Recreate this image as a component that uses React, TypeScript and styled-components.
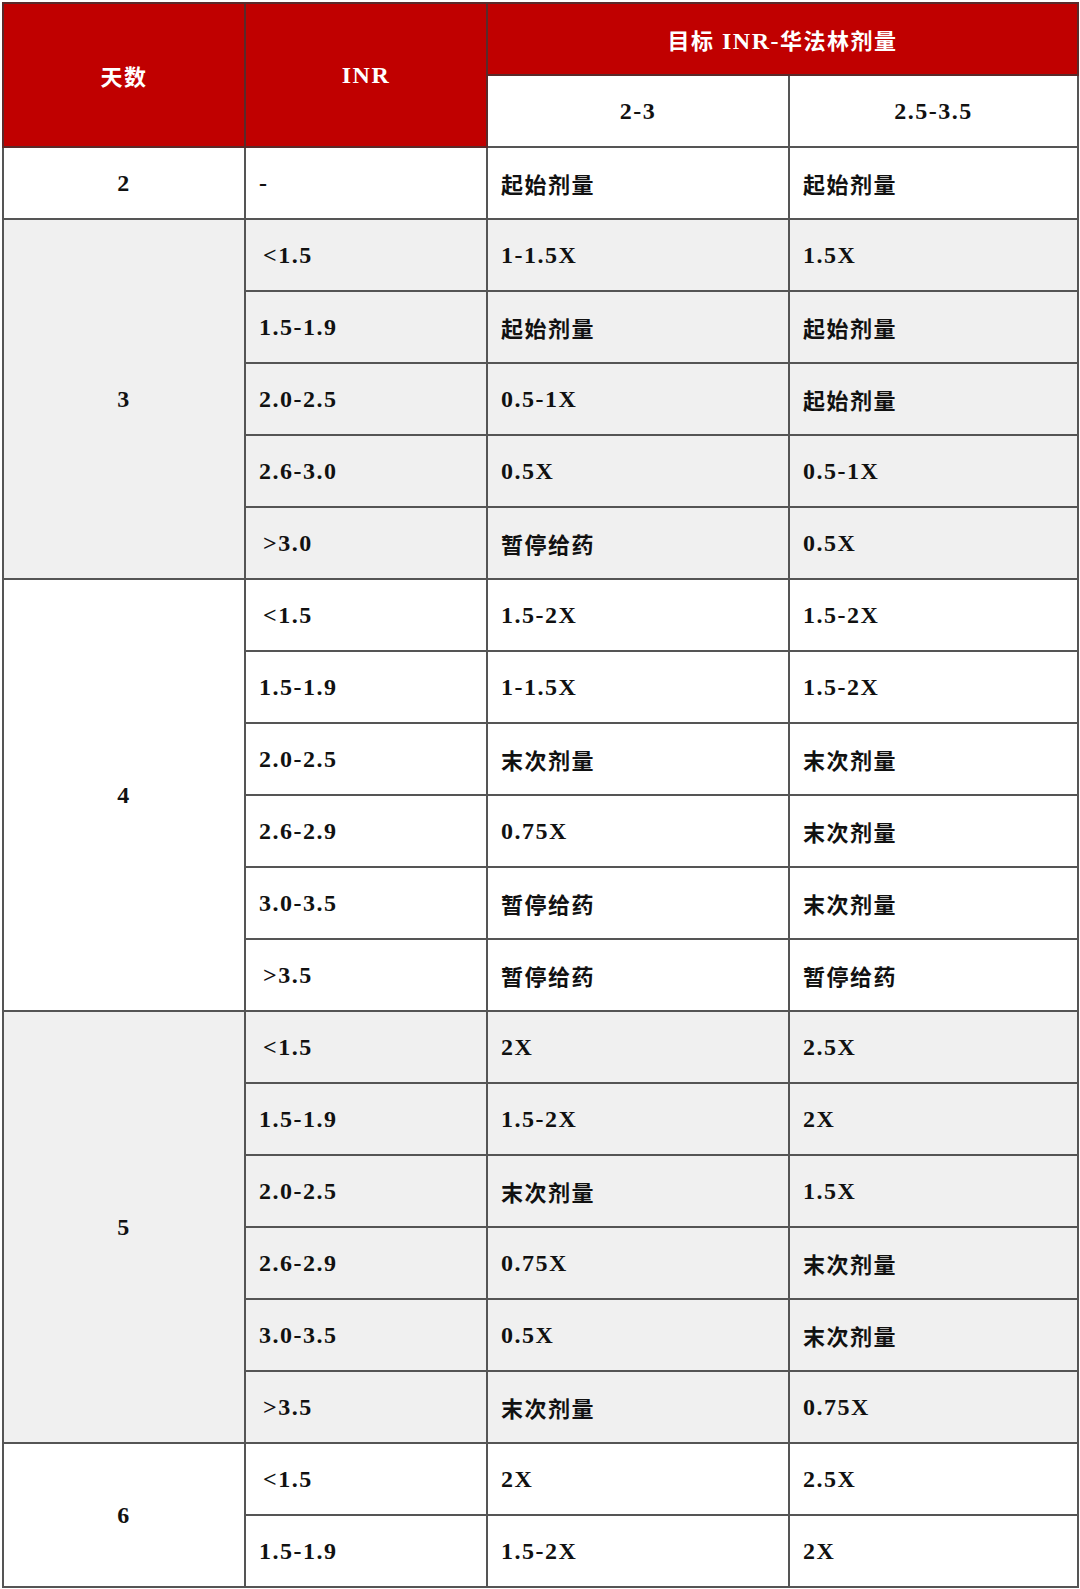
import React from "react";
import styled, { createGlobalStyle } from "styled-components";

const GlobalStyle = createGlobalStyle`
  html, body {
    margin: 0;
    padding: 0;
    background: #ffffff;
  }
  body {
    font-family: "Liberation Serif", "Noto Sans CJK SC", serif;
  }
`;

const Page = styled.div`
  padding: 2px 3px 3px 2px;
  background: #ffffff;
`;

const Table = styled.table`
  width: 1075px;
  border-collapse: collapse;
  table-layout: fixed;
  font-family: "Liberation Serif", "Noto Sans CJK SC", serif;
  font-weight: 700;
  font-size: 24px;
  letter-spacing: 1.5px;
  color: #111111;
  border: 2px solid #555555;
`;

const Row = styled.tr<{ $shade?: boolean }>`
  height: 72px;
  background: ${(p) => (p.$shade ? "#f0f0f0" : "#ffffff")};
`;

const HeadCell = styled.th`
  background: #c00000;
  color: #ffffff;
  font-weight: 700;
  text-align: center;
  vertical-align: middle;
  border: 2px solid #5a2a2a;
  padding: 0;
`;

const SubHeadCell = styled.th`
  background: #ffffff;
  color: #111111;
  font-weight: 700;
  text-align: center;
  vertical-align: middle;
  border: 2px solid #555555;
  padding: 0;
`;

const DayCell = styled.td`
  text-align: center;
  vertical-align: middle;
  border: 2px solid #555555;
  padding: 0;
`;

const Cell = styled.td`
  text-align: left;
  vertical-align: middle;
  border: 2px solid #555555;
  padding: 0 0 0 13px;
  white-space: nowrap;
`;

const Text = styled.span<{ $cjk?: boolean }>`
  font-size: ${(p) => (p.$cjk ? "22px" : "24px")};
  letter-spacing: 1.5px;
`;

const isCjk = (s: string) => /[\u4e00-\u9fff]/.test(s);

const Value: React.FC<{ v: string }> = ({ v }) => <Text $cjk={isCjk(v)}>{v}</Text>;

type Group = { day: string; shade: boolean; rows: [string, string, string][] };

const groups: Group[] = [
  { day: "2", shade: false, rows: [["-", "起始剂量", "起始剂量"]] },
  {
    day: "3",
    shade: true,
    rows: [
      ["<1.5", "1-1.5X", "1.5X"],
      ["1.5-1.9", "起始剂量", "起始剂量"],
      ["2.0-2.5", "0.5-1X", "起始剂量"],
      ["2.6-3.0", "0.5X", "0.5-1X"],
      [">3.0", "暂停给药", "0.5X"],
    ],
  },
  {
    day: "4",
    shade: false,
    rows: [
      ["<1.5", "1.5-2X", "1.5-2X"],
      ["1.5-1.9", "1-1.5X", "1.5-2X"],
      ["2.0-2.5", "末次剂量", "末次剂量"],
      ["2.6-2.9", "0.75X", "末次剂量"],
      ["3.0-3.5", "暂停给药", "末次剂量"],
      [">3.5", "暂停给药", "暂停给药"],
    ],
  },
  {
    day: "5",
    shade: true,
    rows: [
      ["<1.5", "2X", "2.5X"],
      ["1.5-1.9", "1.5-2X", "2X"],
      ["2.0-2.5", "末次剂量", "1.5X"],
      ["2.6-2.9", "0.75X", "末次剂量"],
      ["3.0-3.5", "0.5X", "末次剂量"],
      [">3.5", "末次剂量", "0.75X"],
    ],
  },
  {
    day: "6",
    shade: false,
    rows: [
      ["<1.5", "2X", "2.5X"],
      ["1.5-1.9", "1.5-2X", "2X"],
    ],
  },
];

const InrText = styled.span<{ $lead?: boolean }>`
  display: inline-block;
  margin-left: ${(p) => (p.$lead ? "4px" : "0")};
`;

export default function App() {
  return (
    <>
      <GlobalStyle />
      <Page>
        <Table>
          <colgroup>
            <col style={{ width: 242 }} />
            <col style={{ width: 242 }} />
            <col style={{ width: 302 }} />
            <col style={{ width: 289 }} />
          </colgroup>
          <thead>
            <Row>
              <HeadCell rowSpan={2}>
                <Text $cjk>天数</Text>
              </HeadCell>
              <HeadCell rowSpan={2}>
                <Text>INR</Text>
              </HeadCell>
              <HeadCell colSpan={2}>
                <Text $cjk>目标</Text>
                <Text> INR-</Text>
                <Text $cjk>华法林剂量</Text>
              </HeadCell>
            </Row>
            <Row>
              <SubHeadCell>
                <Text>2-3</Text>
              </SubHeadCell>
              <SubHeadCell>
                <Text>2.5-3.5</Text>
              </SubHeadCell>
            </Row>
          </thead>
          <tbody>
            {groups.map((g) =>
              g.rows.map((r, i) => (
                <Row key={`${g.day}-${i}`} $shade={g.shade}>
                  {i === 0 && (
                    <DayCell rowSpan={g.rows.length}>
                      <Text>{g.day}</Text>
                    </DayCell>
                  )}
                  <Cell>
                    <InrText $lead={r[0].startsWith("<") || r[0].startsWith(">")}>
                      <Value v={r[0]} />
                    </InrText>
                  </Cell>
                  <Cell>
                    <Value v={r[1]} />
                  </Cell>
                  <Cell>
                    <Value v={r[2]} />
                  </Cell>
                </Row>
              ))
            )}
          </tbody>
        </Table>
      </Page>
    </>
  );
}
